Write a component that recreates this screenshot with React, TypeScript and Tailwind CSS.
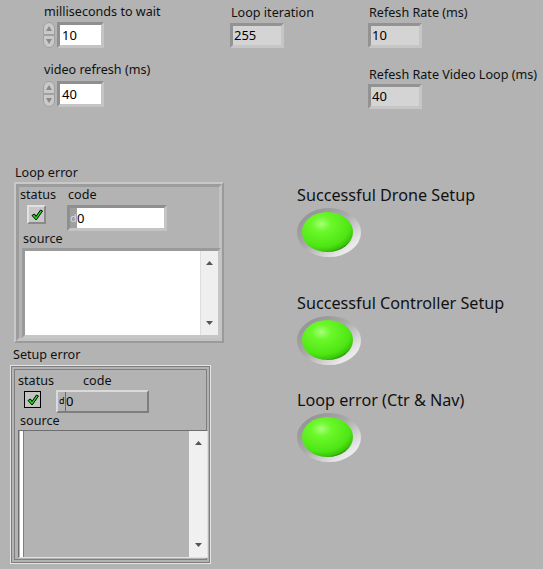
import React from "react";

const sans = "font-['Noto_Sans','Open_Sans',sans-serif]";

function Label({ text, className = "" }: { text: string; className?: string }) {
  return (
    <p className={`text-[12.6px] leading-[16px] text-[#111] ${className}`}>
      {text}
    </p>
  );
}

function Spinner({ value }: { value: string }) {
  return (
    <div className="flex items-center">
      <div className="flex flex-col w-[13px]">
        <div className="h-[13px] w-[12px] rounded-t-full rounded-b-[4px] bg-[#c9c9c9] border border-[#a0a0a0] flex items-center justify-center">
          <svg width="6" height="5" viewBox="0 0 6 5">
            <path d="M3 0 L6 5 L0 5 Z" fill="#8a8a8a" />
          </svg>
        </div>
        <div className="h-[13px] w-[12px] rounded-b-full rounded-t-[4px] bg-[#c9c9c9] border border-[#a0a0a0] flex items-center justify-center">
          <svg width="6" height="5" viewBox="0 0 6 5">
            <path d="M0 0 L6 0 L3 5 Z" fill="#8a8a8a" />
          </svg>
        </div>
      </div>
      <div className="ml-[1px] h-[26px] w-[47px] border-[3px] border-t-[#8f8f8f] border-l-[#8f8f8f] border-r-[#c4c4c4] border-b-[#c4c4c4] bg-white">
        <p className="pl-[2px] text-[13px] leading-[20px] text-black">{value}</p>
      </div>
    </div>
  );
}

function Indicator({ value }: { value: string }) {
  return (
    <div className="h-[25px] w-[54px] border-[3px] border-t-[#939393] border-l-[#939393] border-r-[#c6c6c6] border-b-[#c6c6c6] bg-[#d4d4d4]">
      <p className="pl-[1px] text-[13px] leading-[19px] text-black">{value}</p>
    </div>
  );
}

function Check({ boxed }: { boxed?: boolean }) {
  return (
    <div
      className={
        boxed
          ? "w-[17px] h-[17px] border border-black bg-[#c4c4c4] flex items-center justify-center"
          : "w-[19px] h-[19px] border-2 border-t-[#e2e2e2] border-l-[#e2e2e2] border-r-[#8a8a8a] border-b-[#8a8a8a] bg-[#c8c8c8] flex items-center justify-center"
      }
    >
      <svg width="12" height="12" viewBox="0 0 12 12">
        <path
          d="M1 6.5 L3.5 5 L5 7.5 L9.5 1 L11.5 2 L5.2 11 Z"
          fill="#19e019"
          stroke="#000"
          strokeWidth="1"
          strokeLinejoin="round"
        />
      </svg>
    </div>
  );
}

function ScrollBar({ className = "" }: { className?: string }) {
  return (
    <div className={`w-[18px] h-full flex flex-col justify-between items-center py-[10px] ${className}`}>
      <svg width="7" height="4" viewBox="0 0 7 4">
        <path d="M3.5 0 L7 4 L0 4 Z" fill="#555" />
      </svg>
      <svg width="7" height="4" viewBox="0 0 7 4">
        <path d="M0 0 L7 0 L3.5 4 Z" fill="#555" />
      </svg>
    </div>
  );
}

function Led({ label, className = "" }: { label: string; className?: string }) {
  return (
    <div className={className}>
      <p className="text-[16.2px] leading-[20px] text-[#111]">{label}</p>
      <svg className="mt-[3px]" width="66" height="50" viewBox="0 0 66 50">
        <defs>
          <linearGradient id="ledRing" x1="0" y1="0" x2="1" y2="1">
            <stop offset="0" stopColor="#8c8c8c" />
            <stop offset="0.45" stopColor="#a9a9a9" />
            <stop offset="0.8" stopColor="#e8e8e8" />
            <stop offset="1" stopColor="#f8f8f8" />
          </linearGradient>
          <radialGradient id="ledGlow" cx="0.38" cy="0.3" r="0.75">
            <stop offset="0" stopColor="#a6ff7a" />
            <stop offset="0.25" stopColor="#6cf82a" />
            <stop offset="0.75" stopColor="#4ee614" />
            <stop offset="0.92" stopColor="#39c40a" />
            <stop offset="1" stopColor="#1f6e04" />
          </radialGradient>
        </defs>
        <ellipse cx="32" cy="24.5" rx="32" ry="24.5" fill="url(#ledRing)" />
        <ellipse cx="30.5" cy="24" rx="25.5" ry="20" fill="url(#ledGlow)" />
      </svg>
    </div>
  );
}

export default function App() {
  return (
    <div className={`w-[543px] h-[569px] bg-[#b3b3b3] overflow-hidden ${sans}`}>
      {/* top controls */}
      <div className="flex h-[160px]">
        <div className="w-[230px] pl-[43px] pt-[4px]">
          <Label text="milliseconds to wait" className="ml-[1px]" />
          <div className="mt-[2px]">
            <Spinner value="10" />
          </div>
          <Label text="video refresh (ms)" className="ml-[1px] mt-[14px]" />
          <div className="mt-[3px]">
            <Spinner value="40" />
          </div>
        </div>
        <div className="w-[138px] pt-[5px]">
          <Label text="Loop iteration" className="ml-[1px]" />
          <div className="mt-[2px]">
            <Indicator value="255" />
          </div>
        </div>
        <div className="pt-[5px]">
          <Label text="Refesh Rate (ms)" className="ml-[1px]" />
          <div className="mt-[2px]">
            <Indicator value="10" />
          </div>
          <Label text="Refesh Rate Video Loop (ms)" className="ml-[1px] mt-[19px]" />
          <div className="mt-[1px]">
            <Indicator value="40" />
          </div>
        </div>
      </div>

      <div className="flex">
        {/* error clusters */}
        <div className="w-[287px]">
          <Label text="Loop error" className="ml-[15px] mt-[5px]" />
          <div className="ml-[14px] mt-[1px] w-[210px] h-[161px] border-[2px] border-t-[#c8c8c8] border-l-[#c8c8c8] border-r-[#9a9a9a] border-b-[#9a9a9a]">
            <div className="w-full h-full border-[3px] border-t-[#9c9c9c] border-l-[#9c9c9c] border-r-[#c2c2c2] border-b-[#c2c2c2] px-[1px]">
              <div className="flex">
                <div className="w-[47px]">
                  <Label text="status" />
                  <div className="ml-[7px] mt-[2px]">
                    <Check />
                  </div>
                </div>
                <div>
                  <Label text="code" className="ml-[1px]" />
                  <div className="mt-[2px] h-[26px] w-[100px] border-[3px] border-t-[#8f8f8f] border-l-[#8f8f8f] border-r-[#c4c4c4] border-b-[#c4c4c4] flex">
                    <div className="w-[7px] bg-[#9f9f9f] text-[11px] leading-[20px] text-[#d8d8d8]">d</div>
                    <div className="flex-1 bg-white text-[13px] leading-[20px] text-black">0</div>
                  </div>
                </div>
              </div>
              <Label text="source" className="ml-[3px]" />
              <div className="ml-[2px] mt-[1px] w-[199px] h-[90px] border-[3px] border-t-[#9a9a9a] border-l-[#9a9a9a] border-r-[#c6c6c6] border-b-[#c6c6c6] bg-white flex justify-end">
                <ScrollBar className="bg-[#efefef] border-l border-[#dedede]" />
              </div>
            </div>
          </div>

          <Label text="Setup error" className="ml-[13px] mt-[4px]" />
          <div className="ml-[10px] mt-[2px] w-[201px] h-[199px] border border-[#e4e4e4]">
            <div className="w-full h-full border border-[#7e7e7e] p-[2px]">
              <div className="w-full h-full border border-[#7e7e7e] px-[3px]">
                <div className="flex">
                  <div className="w-[38px]">
                    <Label text="status" className="mt-[3px]" />
                    <div className="ml-[6px] mt-[2px]">
                      <Check boxed />
                    </div>
                  </div>
                  <div>
                    <Label text="code" className="ml-[27px] mt-[3px]" />
                    <div className="mt-[1px] h-[23px] w-[93px] border-2 border-t-[#dadada] border-l-[#dadada] border-r-[#7e7e7e] border-b-[#7e7e7e] flex">
                      <div className="w-[7px] text-[9px] leading-[18px] text-black pl-[1px]">d</div>
                      <div className="flex-1 border-l border-[#6e6e6e] text-[13px] leading-[19px] text-black">0</div>
                    </div>
                  </div>
                </div>
                <Label text="source" className="ml-[2px]" />
                <div className="mt-[1px] w-[190px] h-[128px] border border-t-[#6e6e6e] border-l-[#6e6e6e] border-r-[#e0e0e0] border-b-[#e0e0e0] flex">
                  <div className="w-[3px] bg-white ml-[1px]" />
                  <div className="flex-1 border-l border-[#7e7e7e]" />
                  <ScrollBar className="bg-[#f0f0f0]" />
                </div>
              </div>
            </div>
          </div>
        </div>

        {/* LED indicators */}
        <div className="pt-[25px] ml-[10px]">
          <Led label="Successful Drone Setup" />
          <Led label="Successful Controller Setup" className="mt-[35px]" />
          <Led label="Loop error (Ctr & Nav)" className="mt-[24px]" />
        </div>
      </div>
    </div>
  );
}
